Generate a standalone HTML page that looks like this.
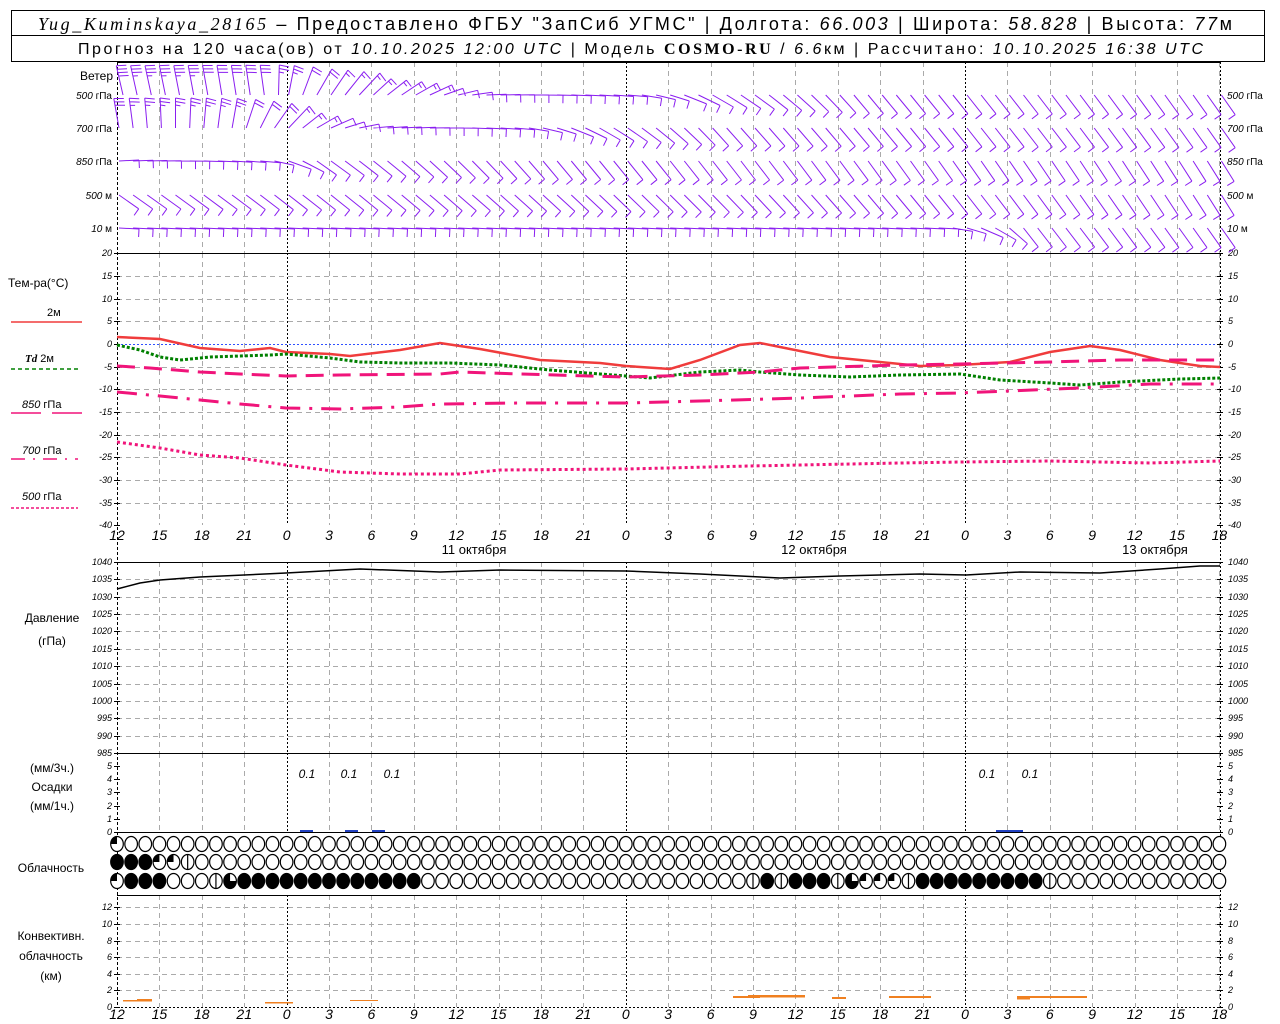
<!DOCTYPE html>
<html><head><meta charset="utf-8">
<style>
html,body{margin:0;padding:0;background:#fff;}
svg{display:block;font-family:"Liberation Sans","DejaVu Sans",sans-serif;}
.it{font-style:italic;}
</style></head>
<body>
<svg id="s" width="1280" height="1024" viewBox="0 0 1280 1024" xmlns="http://www.w3.org/2000/svg">
<rect width="1280" height="1024" fill="#fff"/>
<g id="g"></g>
<!-- header -->
<rect x="11.5" y="10.5" width="1253" height="51" fill="none" stroke="#000"/>
<line x1="11" y1="35.5" x2="1265" y2="35.5" stroke="#000"/>
<text x="38" y="30" font-size="18" textLength="1194" lengthAdjust="spacing"><tspan font-family="Liberation Serif" font-style="italic">Yug_Kuminskaya_28165</tspan> – Предоставлено ФГБУ "ЗапСиб УГМС" | Долгота: <tspan class="it">66.003</tspan> | Широта: <tspan class="it">58.828</tspan> | Высота: <tspan class="it">77</tspan>м</text>
<text x="78" y="54" font-size="16" textLength="1125" lengthAdjust="spacing">Прогноз на 120 часа(ов) от <tspan class="it">10.10.2025 12:00 UTC</tspan>  | Модель <tspan font-family="Liberation Serif" font-weight="bold">COSMO-RU</tspan> / <tspan class="it">6.6</tspan>км | Рассчитано: <tspan class="it">10.10.2025 16:38 UTC</tspan></text>
<!-- left labels -->
<g font-size="12">
<text x="113" y="80" text-anchor="end">Ветер</text>
<text x="8" y="287">Тем-ра(°C)</text>
<text x="47" y="316" font-size="11">2м</text>
<text x="25" y="362" font-size="11"><tspan class="it" font-family="Liberation Serif" font-weight="bold">Td</tspan>  2м</text>
<text x="22" y="408" font-size="11"><tspan class="it">850</tspan> гПа</text>
<text x="22" y="454" font-size="11"><tspan class="it">700</tspan> гПа</text>
<text x="22" y="500" font-size="11"><tspan class="it">500</tspan> гПа</text>
<text x="52" y="622" text-anchor="middle">Давление</text>
<text x="52" y="645" text-anchor="middle">(гПа)</text>
<text x="52" y="772" text-anchor="middle">(мм/3ч.)</text>
<text x="52" y="791" text-anchor="middle">Осадки</text>
<text x="52" y="810" text-anchor="middle">(мм/1ч.)</text>
<text x="51" y="872" text-anchor="middle">Облачность</text>
<text x="51" y="940" text-anchor="middle">Конвективн.</text>
<text x="51" y="960" text-anchor="middle">облачность</text>
<text x="51" y="980" text-anchor="middle">(км)</text>
</g>
<line x1="11" y1="322" x2="82" y2="322" stroke="#f03c3c" stroke-width="1.5"/>
<line x1="11" y1="369" x2="78" y2="369" stroke="#008000" stroke-width="1.5" stroke-dasharray="4,3"/>
<line x1="11" y1="413" x2="82" y2="413" stroke="#f0147a" stroke-width="1.5" stroke-dasharray="30,11"/>
<line x1="11" y1="459" x2="78" y2="459" stroke="#f0147a" stroke-width="1.5" stroke-dasharray="14,8,2,8"/>
<line x1="11" y1="508" x2="78" y2="508" stroke="#f0147a" stroke-width="1.5" stroke-dasharray="3,2"/>
</svg>
<script>
const G=document.getElementById('g');
let h='';
const X0=117,DX=42.4/3;
const hx=t=>X0+t*DX;
function line(x1,y1,x2,y2,st){h+=`<line x1="${x1}" y1="${y1}" x2="${x2}" y2="${y2}" ${st}/>`;}
function txt(x,y,s,a,fs,cls){h+=`<text x="${x}" y="${y}" font-size="${fs||10}" text-anchor="${a||'start'}" ${cls?'font-style="italic"':''}>${s}</text>`;}
const GR='stroke="#aaa" stroke-width="1" stroke-dasharray="5,4"';
const BK='stroke="#000" stroke-width="1" stroke-dasharray="2,2"';
const panels=[[62,253],[253,525],[562,753],[753,832],[895,1007]];
for(let k=1;k<=26;k++){const x=Math.round(hx(k*3))+0.5;const zero=((k*3+12)%24===0);
 panels.forEach(p=>line(x,p[0],x,p[1],zero?BK:GR));}
for(let T=15;T>=-35;T-=5){const y=Math.round(344-T*4.533)+0.5; if(T!==0) line(117,y,1220,y,GR);}
line(117,344.5,1220,344.5,'stroke="#3050ff" stroke-width="1" stroke-dasharray="2,2"');
for(let P=1035;P>=990;P-=5){const y=Math.round(562+(1040-P)*191/55)+0.5;line(117,y,1220,y,GR);}
for(let k=2;k<=12;k+=2){const y=Math.round(1007-k*8.3)+0.5;line(117,y,1220,y,GR);}
[62,253,562,753,832,895].forEach(a=>line(117,a+0.5,1220,a+0.5,'stroke="#000"'));
line(117,1007.5,1220,1007.5,BK);
line(117.5,62,117.5,1007,'stroke="#000" stroke-dasharray="3,2"');
line(1220.5,62,1220.5,1007,BK);
function ticks(vals,yf,fs){vals.forEach(v=>{const y=yf(v);txt(112,y+3,v,'end',fs||9,1);txt(1228,y+3,v,'start',fs||9,1);line(114,y+.5,120,y+.5,'stroke="#000"');line(1217,y+.5,1223,y+.5,'stroke="#000"');});}
ticks([20,15,10,5,0,-5,-10,-15,-20,-25,-30,-35,-40],T=>Math.round(344-T*4.533));
ticks([1040,1035,1030,1025,1020,1015,1010,1005,1000,995,990,985],P=>Math.round(562+(1040-P)*191/55));
ticks([5,4,3,2,1,0],v=>Math.round(832-v*13.2));
ticks([12,10,8,6,4,2,0],v=>Math.round(1007-v*8.3));
function xl(y){for(let k=0;k<=26;k++){const t=(12+k*3)%24;txt(hx(k*3),y,t,'middle',14,1);}}
xl(540);xl(1019);
txt(474,554,'11 октября','middle',13);txt(814,554,'12 октября','middle',13);txt(1155,554,'13 октября','middle',13);
const rows=[[95,'500','гПа'],[128,'700','гПа'],[161,'850','гПа'],[195,'500','м'],[228,'10','м']];
rows.forEach(r=>{h+=`<text x="112" y="${r[0]+4}" font-size="10" text-anchor="end"><tspan font-style="italic">${r[1]}</tspan> ${r[2]}</text>`;
 h+=`<text x="1227" y="${r[0]+4}" font-size="10"><tspan font-style="italic">${r[1]}</tspan> ${r[2]}</text>`;});
function interp(kf,t){for(let i=0;i<kf.length-1;i++){if(t<=kf[i+1][0]){const a=kf[i],b=kf[i+1];const f=(t-a[0])/(b[0]-a[0]);return a.slice(1).map((v,j)=>v+(b[j+1]-v)*f);}}return kf[kf.length-1].slice(1);}
const wk=[
 [[0,-103,4],[10,-98,3],[14,-60,2],[22,-25,1.5],[26,-2,1],[36,5,1],[42,30,1],[52,50,1],[78,55,1]],
 [[0,-100,3],[8,-80,2.5],[14,-30,1.5],[18,-5,1],[28,5,1],[34,30,1],[42,48,1],[78,55,1]],
 [[0,-3,1],[10,5,1],[14,35,1],[30,50,1],[78,58,1]],
 [[0,35,1],[40,45,1],[60,52,1],[78,58,1]],
 [[0,3,1],[58,3,1],[62,30,1],[64,52,1],[78,55,1]]
];
let bp='';
rows.forEach((r,ri)=>{for(let t=0;t<=78;t++){const [a,n]=interp(wk[ri],t);const x=hx(t)+(ri==0&&t<12?6:2),y=r[0];
 const L=a<-45?30:(Math.abs(a)<20?20:24);const ar=a*Math.PI/180;const ex=x+L*Math.cos(ar),ey=y+L*Math.sin(ar);
 bp+=`M${x.toFixed(1)} ${y}L${ex.toFixed(1)} ${ey.toFixed(1)}`;
 const ba=(a+(a<-45?100:90))*Math.PI/180;let nn=n;
 const FL=a<-45?10:8;
 for(let i=0;i<Math.floor(nn+0.01);i++){const d=i*3.5;const px=ex-d*Math.cos(ar),py=ey-d*Math.sin(ar);
  bp+=`M${px.toFixed(1)} ${py.toFixed(1)}l${(FL*Math.cos(ba)).toFixed(1)} ${(FL*Math.sin(ba)).toFixed(1)}`;}
 if(nn%1>0.4){const d=Math.floor(nn)*3.5;const px=ex-d*Math.cos(ar),py=ey-d*Math.sin(ar);bp+=`M${px.toFixed(1)} ${py.toFixed(1)}l${(5*Math.cos(ba)).toFixed(1)} ${(5*Math.sin(ba)).toFixed(1)}`;}
}});
h+=`<path d="${bp}" stroke="#8a1ef0" stroke-width="1" fill="none"/>`;
function poly(pts,st){h+=`<polyline points="${pts.map(p=>p.join(',')).join(' ')}" fill="none" ${st}/>`;}
poly([[117,337],[160,339],[200,348],[240,351],[270,348],[286,352],[330,354],[350,356],[400,350],[440,343],[480,349],[540,360],[600,363],[626,366],[670,369],[700,360],[740,345],[760,343],[780,347],[830,357],[870,361],[920,366],[960,365],[1010,362],[1050,352],[1090,346],[1120,350],[1160,360],[1200,366],[1220,367]],'stroke="#f03c3c" stroke-width="2.5"');
poly([[117,345],[140,350],[160,357],[180,360],[210,357],[240,356],[270,355],[286,354],[330,358],[360,362],[400,363],[450,363],[500,365],[550,370],[600,374],[626,376],[650,378],[700,372],[740,370],[760,372],[800,375],[850,377],[900,375],[960,374],[1000,380],[1050,383],[1080,385],[1120,382],[1180,379],[1220,378]],'stroke="#008000" stroke-width="3" stroke-dasharray="3,2"');
poly([[117,366],[150,368],[200,372],[240,374],[286,376],[340,375],[440,374],[460,372],[520,374],[626,377],[700,375],[760,372],[800,368],[900,365],[960,364],[1050,362],[1120,360],[1220,360]],'stroke="#f0147a" stroke-width="3" stroke-dasharray="18,9"');
poly([[117,392],[160,396],[200,400],[240,404],[286,408],[340,409],[400,407],[440,404],[520,403],[626,403],[700,401],[800,398],[900,394],[960,393],[1080,388],[1150,384],[1220,384]],'stroke="#f0147a" stroke-width="3" stroke-dasharray="20,9,3,9"');
poly([[117,442],[160,448],[200,455],[240,458],[286,465],[340,472],[400,474],[460,474],[500,470],[626,469],[750,466],[900,463],[960,462],[1050,461],[1150,463],[1220,461]],'stroke="#f0147a" stroke-width="3" stroke-dasharray="3,3"');
poly([[117,589],[140,583],[160,580],[200,577],[286,573],[360,569],[440,572],[500,570],[626,571],[700,574],[780,578],[840,576],[920,574],[966,575],[1020,572],[1100,573],[1160,569],[1200,566],[1220,566]],'stroke="#000" stroke-width="1.5"');
[[300,313],[345,358],[372,385],[996,1023]].forEach(b=>h+=`<rect x="${b[0]}" y="830" width="${b[1]-b[0]}" height="2" fill="#2040c0"/>`);
[307,349,392,987,1030].forEach(x=>txt(x,778,'0.1','middle',12,1));
[[123,137,1000,1.5],[137,152,999,2.5],[265,293,1002,1.5],[350,378,1000,1],[733,760,996,2],[748,805,995,2.5],[832,846,997,2],[889,931,996,2],[1017,1030,996,3.5],[1030,1087,996,2]].forEach(b=>h+=`<rect x="${b[0]}" y="${b[2]}" width="${b[1]-b[0]}" height="${b[3]}" fill="#f08020"/>`);
const rowsC=['Q'+'O'.repeat(78),'FFFqqH'+'O'.repeat(73),'QFFFOOOHT'+'F'.repeat(13)+'O'.repeat(23)+'HFHFFFHTQQQH'+'F'.repeat(9)+'H'+'O'.repeat(12)];
const cy=[844,862,881];
rowsC.forEach((s,ri)=>{for(let i=0;i<79;i++){const c=s[i]||'O';const x=hx(i),y=cy[ri];const rx=6.3,ry=7.5;
 h+=`<ellipse cx="${x}" cy="${y}" rx="${rx}" ry="${ry}" fill="${c=='F'?'#000':'#fff'}" stroke="#000" stroke-width="1.2"/>`;
 if(c=='H')h+=`<line x1="${x}" y1="${y-ry}" x2="${x}" y2="${y+ry}" stroke="#000" stroke-width="1.2"/>`;
 if(c=='Q'||c=='q')h+=`<path d="M${x} ${y}V${y-ry}A${rx} ${ry} 0 0 0 ${x-rx} ${y}Z" fill="#000"/>`;
 if(c=='T')h+=`<path d="M${x} ${y}V${y-ry}A${rx} ${ry} 0 1 0 ${x+rx} ${y}Z" fill="#000"/>`;
}});
G.innerHTML=h;
</script>
</body></html>
